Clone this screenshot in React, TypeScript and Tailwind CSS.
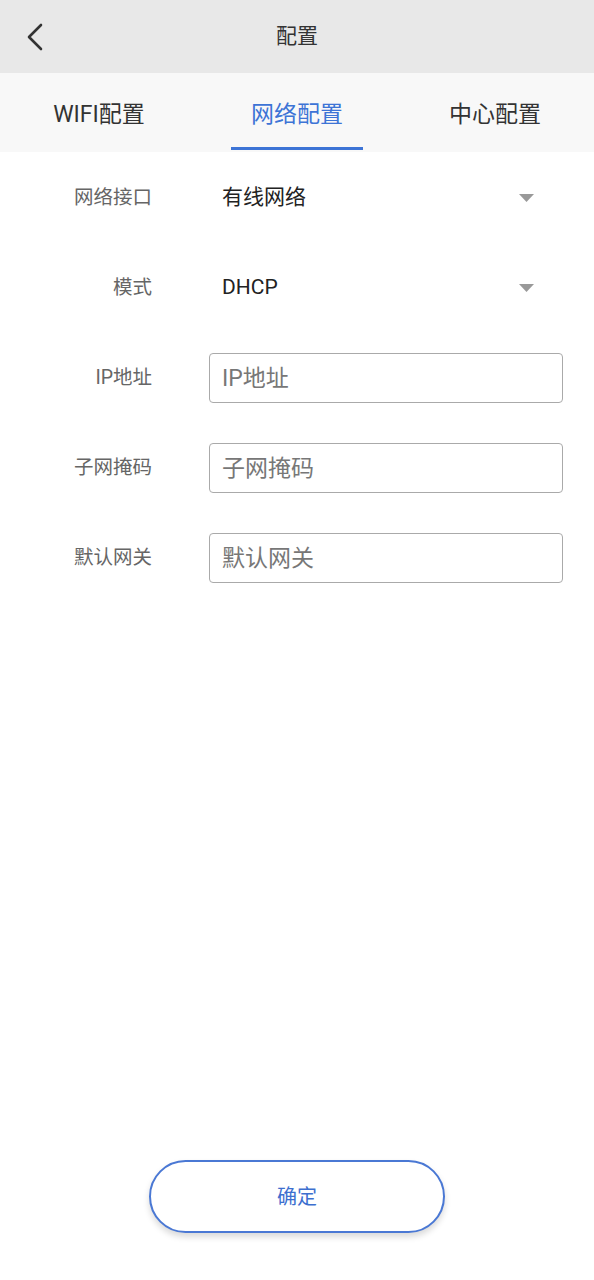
import React from "react";

const font = { fontFamily: "Roboto, 'Noto Sans CJK SC', sans-serif" };

function BackIcon() {
  return (
    <svg width="18" height="28" viewBox="0 0 18 28" fill="none" stroke="#333" strokeWidth="2.6" strokeLinecap="round" strokeLinejoin="round">
      <path d="M15 2 3 14l12 12" />
    </svg>
  );
}

function Caret() {
  return (
    <svg width="15" height="8" viewBox="0 0 15 8" className="shrink-0">
      <path d="M0 0h15L7.5 8z" fill="#999" />
    </svg>
  );
}

const tabs = ["WIFI配置", "网络配置", "中心配置"];

export default function App() {
  const active = 1;
  const selects = [
    { label: "网络接口", value: "有线网络" },
    { label: "模式", value: "DHCP" },
  ];
  const inputs = ["IP地址", "子网掩码", "默认网关"];

  return (
    <div className="flex min-h-[1280px] flex-col bg-white" style={font}>
      <div className="relative flex h-[73px] items-center justify-center bg-[#e8e8e8]">
        <button className="absolute left-[26px] top-[23px]">
          <BackIcon />
        </button>
        <span className="text-[21px] text-[#333]">配置</span>
      </div>

      <div className="grid h-[79px] grid-cols-3 bg-[#f8f8f8]">
        {tabs.map((t, i) => (
          <div key={t} className="relative flex items-center justify-center pt-[5px]">
            <span className={`text-[23px] ${i === active ? "text-[#3d74d6]" : "text-[#333]"}`}>{t}</span>
            {i === active && (
              <div className="absolute bottom-[2px] left-1/2 h-[3px] w-[132px] -translate-x-1/2 bg-[#3d74d6]" />
            )}
          </div>
        ))}
      </div>

      <div className="flex flex-col gap-[40px] pt-[21px] pr-[31px]">
        {selects.map((s) => (
          <div key={s.label} className="flex h-[50px] items-center">
            <div className="w-[152px] text-right text-[19.5px] text-[#666]">{s.label}</div>
            <div className="ml-[57px] flex flex-1 items-center justify-between pl-[13px] pr-[29px]">
              <span className="text-[21px] text-[#222]">{s.value}</span>
              <Caret />
            </div>
          </div>
        ))}
        {inputs.map((p) => (
          <div key={p} className="flex h-[50px] items-center">
            <div className="w-[152px] text-right text-[19.5px] text-[#666]">{p}</div>
            <input
              placeholder={p}
              className="ml-[57px] h-[50px] flex-1 rounded-[4px] border-[1.5px] border-[#aaa] px-[12px] text-[23px] text-[#333] outline-none placeholder:text-[#777]"
            />
          </div>
        ))}
      </div>

      <div className="mt-auto mb-[47px] flex justify-center">
        <button className="h-[73px] w-[296px] rounded-full border-2 border-[#4a78d4] bg-white text-[20px] text-[#3d6fcf] shadow-[0_4px_6px_rgba(0,0,0,0.15)]">
          确定
        </button>
      </div>
    </div>
  );
}
